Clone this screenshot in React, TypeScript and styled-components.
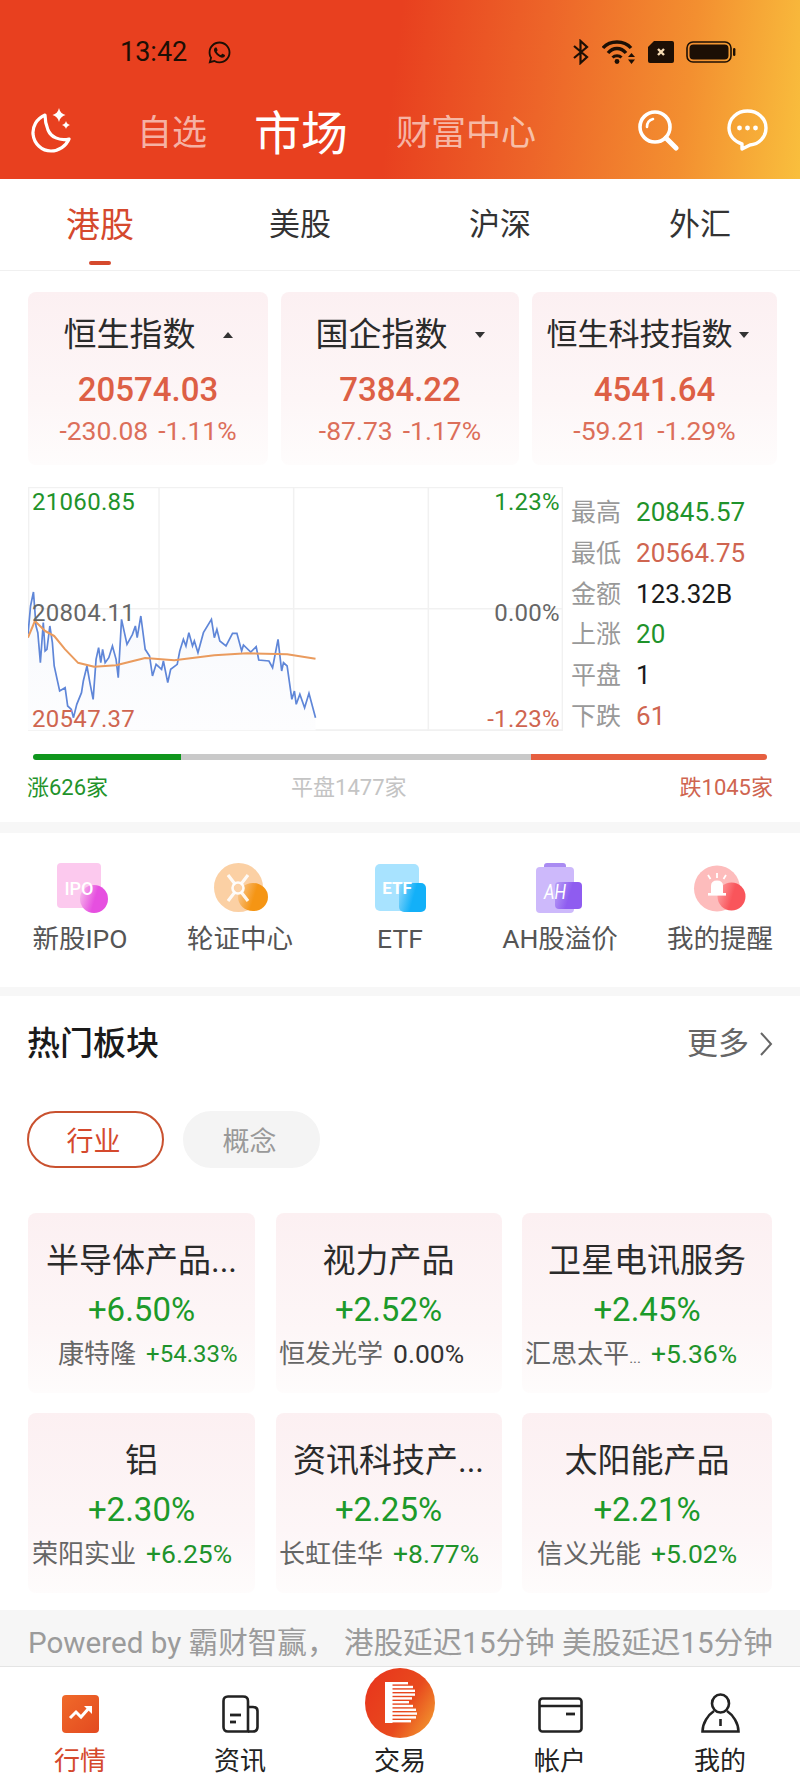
import styled, { createGlobalStyle } from "styled-components";
import { FaWhatsapp } from "react-icons/fa";

const GlobalStyle = createGlobalStyle`
  html, body {
    margin: 0;
    padding: 0;
    background: #fff;
  }
  * {
    box-sizing: border-box;
  }
  body {
    font-family: Roboto, "Noto Sans CJK SC", sans-serif;
  }
`;

const Page = styled.div`
  width: 800px;
  height: 1778px;
  display: flex;
  flex-direction: column;
  background: #fff;
  overflow: hidden;
`;

const Header = styled.header`
  height: 179px;
  background: linear-gradient(97deg, #e8401f 0%, #e8401f 49%, #ed6529 67%, #f38f30 85%, #f9bf3d 100%);
`;

const StatusBar = styled.div`
  height: 90px;
  padding: 14px 64px 0 120px;
  display: flex;
  align-items: center;
  color: #1c0f05;
`;

const Time = styled.span`
  font-size: 27px;
  line-height: 32px;
  width: 87px;
`;

const StatusIcons = styled.div`
  margin-left: auto;
  display: flex;
  align-items: center;
  gap: 12px;
`;

const Nav = styled.nav`
  height: 89px;
  padding: 0 32px 2px 31px;
  display: flex;
  align-items: center;
`;

const NavLink = styled.span<{ $active?: boolean }>`
  margin-left: ${(p) => (p.$active ? "47px" : "0")};
  margin-right: ${(p) => (p.$active ? "48px" : "0")};
  font-size: ${(p) => (p.$active ? "47px" : "35px")};
  line-height: 56px;
  color: ${(p) => (p.$active ? "#fff" : "rgba(255, 255, 255, 0.62)")};
`;

const MoonSlot = styled.div`
  width: 40px;
  height: 46px;
  margin-right: 66px;
  margin-bottom: 6px;
`;

const NavActions = styled.div`
  margin-left: auto;
  margin-bottom: 8px;
  display: flex;
  align-items: center;
  gap: 48px;
`;

const Tabs = styled.div`
  height: 92px;
  display: grid;
  grid-template-columns: repeat(4, 200px);
  border-bottom: 1px solid #f0f0f0;
`;

const Tab = styled.div<{ $active?: boolean }>`
  padding-top: 24px;
  display: flex;
  flex-direction: column;
  align-items: center;
  font-size: ${(p) => (p.$active ? "34px" : "31px")};
  line-height: 44px;
  color: ${(p) => (p.$active ? "#d5492d" : "#333")};
`;

const TabLine = styled.div`
  width: 22px;
  height: 4px;
  margin-top: 14px;
  border-radius: 2px;
  background: #d5492d;
`;

const IndexRow = styled.div`
  margin-top: 21px;
  padding-left: 28px;
  display: grid;
  grid-template-columns: 240px 238px 245px;
  gap: 13px;
`;

const IndexCard = styled.div`
  height: 173px;
  padding-top: 21px;
  border-radius: 8px;
  background: linear-gradient(180deg, #fcf0f2 0%, #fdf6f7 62%, #fefcfc 100%);
  display: flex;
  flex-direction: column;
  align-items: center;
`;

const IndexHead = styled.div<{ $gap: number; $shift: number }>`
  margin-right: ${(p) => p.$shift}px;
  display: flex;
  align-items: center;
  gap: ${(p) => p.$gap}px;
`;

const IndexName = styled.span<{ $narrow?: boolean }>`
  font-size: ${(p) => (p.$narrow ? "31px" : "33px")};
  line-height: 44px;
  color: #2b2b2b;
`;

const Caret = styled.span<{ $up?: boolean }>`
  width: 0;
  height: 0;
  border-left: 5px solid transparent;
  border-right: 5px solid transparent;
  border-${(p) => (p.$up ? "bottom" : "top")}: 6px solid #333;
`;

const IndexValue = styled.div`
  margin-top: 11px;
  font-size: 33px;
  line-height: 44px;
  font-weight: 500;
  color: #dd5f45;
`;

const IndexChange = styled.div`
  margin-top: 3px;
  display: flex;
  gap: 10px;
  font-size: 26.5px;
  line-height: 32px;
  color: #dc6f5a;
`;

const ChartRow = styled.div`
  height: 244px;
  margin-top: 22px;
  padding-left: 28px;
  display: flex;
  gap: 8px;
`;

const Chart = styled.div`
  position: relative;
  width: 535px;
  height: 244px;
`;

const ChartSvg = styled.svg`
  display: block;
  width: 100%;
  height: 100%;
`;

const AxisLabel = styled.span<{ $tone: string; $right?: boolean; $pos: string }>`
  position: absolute;
  ${(p) => (p.$right ? "right: 3px;" : "left: 4px;")}
  ${(p) => p.$pos}
  font-size: 24px;
  line-height: 28px;
  letter-spacing: 0.3px;
  color: ${(p) => p.$tone};
`;

const Stats = styled.div`
  padding-top: 5px;
  display: flex;
  flex-direction: column;
`;

const StatRow = styled.div`
  height: 40.7px;
  flex: none;
  display: flex;
  align-items: center;
  gap: 15px;
`;

const StatLabel = styled.span`
  margin-bottom: 4px;
  font-size: 25px;
  color: #999;
`;

const StatValue = styled.span<{ $tone: string }>`
  font-size: 26px;
  color: ${(p) => p.$tone};
`;

const Breadth = styled.div`
  margin: 23px 33px 0;
  height: 6px;
  display: flex;
  border-radius: 3px;
  overflow: hidden;
`;

const BreadthPart = styled.div<{ $tone: string; $width: number }>`
  width: ${(p) => p.$width}px;
  background: ${(p) => p.$tone};
`;

const BreadthLabels = styled.div`
  margin-top: 13px;
  padding: 0 27px 19px;
  display: flex;
  justify-content: space-between;
  font-size: 22px;
  line-height: 30px;
`;

const BreadthLabel = styled.span<{ $tone: string; $pull?: number }>`
  margin-right: ${(p) => p.$pull ?? 0}px;
  color: ${(p) => p.$tone};
`;

const Band = styled.div<{ $h: number }>`
  height: ${(p) => p.$h}px;
  background: #f7f7f7;
`;

const Shortcuts = styled.div`
  padding: 27px 0 30px;
  display: grid;
  grid-template-columns: repeat(5, 160px);
`;

const Shortcut = styled.div`
  display: flex;
  flex-direction: column;
  align-items: center;
  gap: 5px;
`;

const ShortcutLabel = styled.span`
  font-size: 26.5px;
  line-height: 36px;
  color: #555;
`;

const HotHead = styled.div`
  margin-top: 26px;
  padding: 0 27px 0 27px;
  display: flex;
  justify-content: space-between;
  align-items: center;
`;

const HotTitle = styled.h2`
  margin: 0;
  font-size: 33px;
  line-height: 44px;
  font-weight: 500;
  color: #1a1a1a;
`;

const More = styled.div`
  display: flex;
  align-items: center;
  gap: 10px;
  font-size: 31px;
  line-height: 44px;
  color: #666;
`;

const Pills = styled.div`
  margin-top: 45px;
  padding-left: 27px;
  display: flex;
  gap: 19px;
`;

const Pill = styled.div<{ $active?: boolean }>`
  width: 137px;
  height: 57px;
  padding-right: 4px;
  border-radius: 28.5px;
  display: flex;
  align-items: center;
  justify-content: center;
  font-size: 27px;
  border: 2px solid ${(p) => (p.$active ? "#c9512f" : "#f4f4f4")};
  background: ${(p) => (p.$active ? "#fff" : "#f4f4f4")};
  color: ${(p) => (p.$active ? "#d5492d" : "#999")};
`;

const SectorGrid = styled.div`
  margin-top: 45px;
  padding: 0 0 17px 28px;
  display: grid;
  grid-template-columns: 227px 226px 250px;
  grid-auto-rows: 180px;
  column-gap: 20.5px;
  row-gap: 20px;
`;

const SectorCard = styled.div`
  padding-top: 26px;
  border-radius: 8px;
  background: linear-gradient(180deg, #fcf0f2 0%, #fdf6f7 65%, #fefcfc 100%);
  display: flex;
  flex-direction: column;
  align-items: center;
`;

const SectorName = styled.div`
  font-size: 33px;
  line-height: 44px;
  color: #2b2b2b;
  white-space: nowrap;
`;

const SectorPct = styled.div`
  margin-top: 5px;
  font-size: 33px;
  line-height: 44px;
  color: #1c9a2a;
`;

const SectorSub = styled.div`
  margin-top: 5px;
  height: 34px;
  align-self: stretch;
  display: grid;
  grid-template-columns: 47.6% 1fr;
  column-gap: 10px;
  align-items: center;
  line-height: 34px;
  white-space: nowrap;
`;

const SectorStock = styled.span`
  font-size: 26px;
  text-align: right;
  color: #666;
`;

const StockDots = styled.span`
  font-size: 15px;
  line-height: 0;
`;

const SectorMove = styled.span<{ $tone: string; $small?: boolean }>`
  font-size: ${(p) => (p.$small ? "24px" : "26.5px")};
  color: ${(p) => p.$tone};
`;

const Notice = styled.div`
  height: 57px;
  padding: 4px 0 0 28px;
  display: flex;
  align-items: center;
  background: #f6f6f6;
  border-bottom: 1px solid #e4e4e4;
  font-size: 29.6px;
  color: #9b9b9b;
  white-space: nowrap;
`;

const TabBar = styled.div`
  height: 111px;
  display: grid;
  grid-template-columns: repeat(5, 160px);
`;

const BarItem = styled.div`
  display: flex;
  flex-direction: column;
  align-items: center;
`;

const BarIcon = styled.div<{ $raised?: boolean }>`
  height: 78px;
  padding-bottom: ${(p) => (p.$raised ? "7px" : "12px")};
  display: flex;
  align-items: flex-end;
`;

const BarLabel = styled.span<{ $active?: boolean }>`
  font-size: 26px;
  line-height: 33px;
  color: ${(p) => (p.$active ? "#d5492d" : "#222")};
`;

const Drawing = styled.svg`
  display: block;
`;

function MoonIcon() {
  return (
    <Drawing width="40" height="46" viewBox="0 0 40 46" fill="none">
      <path
        d="M14 7 C5 11 1.5 19 2 26 C3 36 11 43 20 43 C28 43 35 38 38 31 C28 33 20 29 17 22 C15 17 14 12 14 7 Z"
        stroke="#fff"
        strokeWidth="3.2"
        strokeLinejoin="round"
      />
      <path d="M28 0 C29 4 31 6 34.5 7 C31 8 29 10 28 14 C27 10 25 8 21.5 7 C25 6 27 4 28 0 Z" fill="#fff" />
      <path d="M35 13 C35.5 15 36.5 16 39 17 C36.5 18 35.5 19 35 21 C34.5 19 33.5 18 31 17 C33.5 16 34.5 15 35 13 Z" fill="#fff" />
    </Drawing>
  );
}

function SearchIcon() {
  return (
    <Drawing width="42" height="42" viewBox="0 0 42 42" fill="none">
      <circle cx="18" cy="18" r="15" stroke="#fff" strokeWidth="3.6" />
      <path d="M10 18 C10 14 12 11 16 10" stroke="#fff" strokeWidth="2.6" strokeLinecap="round" />
      <path d="M29 29 L39 39" stroke="#fff" strokeWidth="5" strokeLinecap="round" />
    </Drawing>
  );
}

function ChatIcon() {
  return (
    <Drawing width="41" height="42" viewBox="0 0 41 42" fill="none">
      <path
        d="M20.5 2 C10 2 2 9.5 2 19 C2 27 8 33 15 35 L15 40 L23 36 C32 35.5 39 28 39 19 C39 9.5 31 2 20.5 2 Z"
        stroke="#fff"
        strokeWidth="3.4"
        strokeLinejoin="round"
      />
      <circle cx="12.5" cy="19" r="2.4" fill="#fff" />
      <circle cx="20.5" cy="19" r="2.4" fill="#fff" />
      <circle cx="28.5" cy="19" r="2.4" fill="#fff" />
    </Drawing>
  );
}

function BluetoothIcon() {
  return (
    <Drawing width="18" height="26" viewBox="0 0 18 26" fill="none">
      <path d="M2 7 L15 18 L8.5 24 L8.5 2 L15 8 L2 19" stroke="#1c0f05" strokeWidth="2.2" />
    </Drawing>
  );
}

function WifiIcon() {
  return (
    <Drawing width="34" height="24" viewBox="0 0 34 24" fill="none">
      <path d="M1 8 C8 0 22 0 29 8" stroke="#1c0f05" strokeWidth="3.4" />
      <path d="M6 13 C11 7 19 7 24 13" stroke="#1c0f05" strokeWidth="3.4" />
      <path d="M10.5 17.5 C13 15 17 15 19.5 17.5" stroke="#1c0f05" strokeWidth="3" />
      <circle cx="15" cy="21.5" r="2.4" fill="#1c0f05" />
      <path d="M29.5 13 L33 17 H26 Z M29.5 24 L26 19.5 H33 Z" fill="#1c0f05" />
    </Drawing>
  );
}

function SimIcon() {
  return (
    <Drawing width="26" height="22" viewBox="0 0 26 22">
      <path d="M6 0 H24 Q26 0 26 2 V20 Q26 22 24 22 H2 Q0 22 0 20 V6 Z" fill="#1c0f05" />
      <path d="M10 8 L16 14 M16 8 L10 14" stroke="#f6dcb4" strokeWidth="2.4" />
    </Drawing>
  );
}

function BatteryIcon() {
  return (
    <Drawing width="50" height="22" viewBox="0 0 50 22">
      <rect x="1" y="1" width="44" height="20" rx="6" fill="none" stroke="#1c0f05" strokeWidth="1.6" />
      <rect x="3.5" y="3.5" width="39" height="15" rx="4" fill="#1c0f05" />
      <rect x="47" y="7" width="2.4" height="8" rx="1.2" fill="#1c0f05" />
    </Drawing>
  );
}

const bluePoints =
  "78,495 85,410 93,368 100,470 105,490 112,580 120,460 125,545 130,540 138,470 145,520 150,590 160,640 165,665 180,655 187,710 197,720 203,745 212,705 225,670 230,635 240,590 248,640 257,690 265,570 272,535 278,580 283,540 290,580 300,565 310,530 320,570 326,625 335,450 350,525 365,495 373,470 378,505 388,440 400,540 412,560 420,620 430,585 445,600 450,575 462,640 470,600 488,585 495,545 505,510 512,530 520,490 530,530 535,515 545,550 560,490 582,450 590,505 597,480 605,515 622,530 640,492 652,492 665,545 670,527 690,548 705,532 712,572 740,575 750,595 765,510 775,605 780,580 790,590 803,690 810,665 815,705 825,675 838,715 850,672 868,745";

const orangePoints =
  "78,505 97,455 125,485 150,500 180,540 215,580 260,592 320,588 400,566 480,573 590,558 680,552 790,555 868,568";

function IntradayChart() {
  const area = `${bluePoints} 868,783 78,783`;
  return (
    <ChartSvg viewBox="78 53 1470 732" preserveAspectRatio="none">
      <defs>
        <linearGradient id="chartFill" x1="0" y1="0" x2="0" y2="1">
          <stop offset="0" stopColor="#f7f9fd" />
          <stop offset="1" stopColor="#fdfdfe" />
        </linearGradient>
      </defs>
      <rect x="79" y="54" width="1468" height="729" fill="#fff" stroke="#f1f1f1" strokeWidth="2" vectorEffect="non-scaling-stroke" />
      {[438, 808, 1178].map((x) => (
        <line key={x} x1={x} y1="54" x2={x} y2="783" stroke="#f1f1f1" strokeWidth="1.5" vectorEffect="non-scaling-stroke" />
      ))}
      <line x1="79" y1="418" x2="1547" y2="418" stroke="#f1f1f1" strokeWidth="1.5" vectorEffect="non-scaling-stroke" />
      <polygon points={area} fill="url(#chartFill)" />
      <polyline points={bluePoints} fill="none" stroke="#5f86d8" strokeWidth="1.7" vectorEffect="non-scaling-stroke" />
      <polyline points={orangePoints} fill="none" stroke="#ea9b5e" strokeWidth="2" strokeLinejoin="round" vectorEffect="non-scaling-stroke" />
    </ChartSvg>
  );
}

// frosted overlap: the small shape fades into the big one on its left side
function Frost({ id, light, solid }: { id: string; light: string; solid: string }) {
  return (
    <defs>
      <linearGradient id={id} x1="0" y1="0.3" x2="1" y2="0.6">
        <stop offset="0" stopColor={light} />
        <stop offset="0.55" stopColor={solid} />
        <stop offset="1" stopColor={solid} />
      </linearGradient>
    </defs>
  );
}

function IpoIcon() {
  return (
    <Drawing width="60" height="56" viewBox="0 0 60 56">
      <Frost id="ipoFrost" light="#f6b4ea" solid="#e64fe0" />
      <rect x="7" y="3" width="44" height="45" rx="4" fill="#fcc9ee" />
      <circle cx="44" cy="39" r="14" fill="url(#ipoFrost)" />
      <text x="29" y="35" textAnchor="middle" fontSize="18" fontFamily="Roboto" fontWeight="500" fill="#fff">IPO</text>
    </Drawing>
  );
}

function WarrantIcon() {
  return (
    <Drawing width="60" height="56" viewBox="0 0 60 56">
      <Frost id="warrantFrost" light="#f8c48a" solid="#f59514" />
      <circle cx="28.5" cy="27.5" r="24.5" fill="#fbd0a4" />
      <ellipse cx="43" cy="37" rx="15" ry="14" fill="url(#warrantFrost)" />
      <path d="M18 15 L38 41 M38 15 L18 41" stroke="#fff" strokeWidth="3.2" opacity="0.9" />
      <circle cx="28" cy="28" r="5.5" fill="#fbd0a4" stroke="#fff" strokeWidth="2.6" opacity="0.95" />
    </Drawing>
  );
}

function EtfIcon() {
  return (
    <Drawing width="60" height="56" viewBox="0 0 60 56">
      <Frost id="etfFrost" light="#7fd3fb" solid="#13b0f8" />
      <rect x="5" y="4" width="44" height="47" rx="5" fill="#a8e3ff" />
      <rect x="29" y="23" width="27" height="29" rx="5" fill="url(#etfFrost)" />
      <text x="27" y="34" textAnchor="middle" fontSize="17" fontFamily="Roboto" fontWeight="700" fill="#fff">ETF</text>
    </Drawing>
  );
}

function AhIcon() {
  return (
    <Drawing width="60" height="56" viewBox="0 0 60 56">
      <Frost id="ahFrost" light="#b498f6" solid="#8f5cf0" />
      <rect x="14" y="3" width="22" height="10" rx="3" fill="#a98bf2" />
      <rect x="6" y="7" width="38" height="46" rx="4" fill="#cdb9fb" />
      <rect x="25" y="22" width="27" height="27" rx="4" fill="url(#ahFrost)" />
      <text x="25" y="39" textAnchor="middle" fontSize="21" textLength="22" lengthAdjust="spacingAndGlyphs" fontStyle="italic" fontFamily="Roboto" fill="#fff">AH</text>
    </Drawing>
  );
}

function AlertIcon() {
  return (
    <Drawing width="60" height="56" viewBox="0 0 60 56">
      <Frost id="alertFrost" light="#fd9c9e" solid="#f9555b" />
      <circle cx="27" cy="28.5" r="23" fill="#fdbcbc" />
      <circle cx="41.5" cy="36.5" r="14" fill="url(#alertFrost)" />
      <path d="M21 33 V26 Q21 20.5 27 20.5 Q33 20.5 33 26 V33 Z" fill="#fff" />
      <rect x="18" y="33" width="18" height="2.6" fill="#fff" />
      <path d="M27 13 V18 M18 15 L20.5 19 M36 15 L33.5 19" stroke="#fff" strokeWidth="1.8" />
    </Drawing>
  );
}

function MarketTabIcon() {
  return (
    <Drawing width="37" height="38" viewBox="0 0 37 38">
      <defs>
        <linearGradient id="marketFill" x1="0" y1="0" x2="1" y2="1">
          <stop offset="0" stopColor="#f06a2a" />
          <stop offset="1" stopColor="#e34a20" />
        </linearGradient>
      </defs>
      <rect width="37" height="38" rx="4" fill="url(#marketFill)" />
      <path d="M8 23 L14 17 L19 22 L27 13" fill="none" stroke="#fff" strokeWidth="3" />
      <path d="M22 11 H30 V19 Z" fill="#fff" />
    </Drawing>
  );
}

function NewsTabIcon() {
  return (
    <Drawing width="37" height="38" viewBox="0 0 37 38" fill="none">
      <path d="M26 36.5 H6 Q1.5 36.5 1.5 32 V6 Q1.5 1.5 6 1.5 H21 Q26 1.5 26 6 V36.5 Z" stroke="#222" strokeWidth="2.6" />
      <path d="M26 12 H31 Q35.5 12 35.5 16 V32 Q35.5 36.5 31 36.5 H26" stroke="#222" strokeWidth="2.6" />
      <path d="M8 20 H19" stroke="#222" strokeWidth="2.8" />
      <path d="M8 27 H14" stroke="#222" strokeWidth="2.8" />
    </Drawing>
  );
}

function TradeLogo() {
  const stripes = [
    [14, 16], [17.8, 21], [21.6, 23], [25.4, 23], [29.2, 20], [33, 17],
    [36.8, 21], [40.6, 24], [44.4, 25], [48.2, 24], [52, 19],
  ];
  return (
    <Drawing width="70" height="70" viewBox="0 0 70 70">
      <defs>
        <linearGradient id="tradeFill" x1="0" y1="0.2" x2="1" y2="0.8">
          <stop offset="0" stopColor="#e8361c" />
          <stop offset="0.6" stopColor="#e84a1e" />
          <stop offset="1" stopColor="#f2962e" />
        </linearGradient>
      </defs>
      <circle cx="35" cy="35" r="35" fill="url(#tradeFill)" />
      <rect x="20" y="14" width="7.5" height="41" fill="#fff" />
      {stripes.map(([y, w]) => (
        <rect key={y} x="27" y={y} width={w} height="2.4" fill="#fff" />
      ))}
    </Drawing>
  );
}

function WalletTabIcon() {
  return (
    <Drawing width="45" height="36" viewBox="0 0 45 36" fill="none">
      <rect x="1.5" y="1.5" width="42" height="33" rx="3" stroke="#222" strokeWidth="2.6" />
      <path d="M1.5 9 H43.5" stroke="#222" strokeWidth="2.6" />
      <path d="M28 17 H37" stroke="#222" strokeWidth="2.8" />
    </Drawing>
  );
}

function PersonTabIcon() {
  return (
    <Drawing width="39" height="40" viewBox="0 0 39 40" fill="none">
      <ellipse cx="19.5" cy="10.5" rx="8.5" ry="9" stroke="#222" strokeWidth="2.6" />
      <path d="M13 18 C7 22 1.5 30 1.5 38.5 H37.5 C37.5 30 32 22 26 18" stroke="#222" strokeWidth="2.6" />
      <path d="M19.5 26 V33" stroke="#222" strokeWidth="2.6" />
    </Drawing>
  );
}

const indices = [
  { name: "恒生指数", value: "20574.03", delta: "-230.08", pct: "-1.11%", up: true, gap: 27, shift: 0 },
  { name: "国企指数", value: "7384.22", delta: "-87.73", pct: "-1.17%", gap: 27, shift: 0 },
  { name: "恒生科技指数", value: "4541.64", delta: "-59.21", pct: "-1.29%", gap: 6, shift: 14, narrow: true },
];

const green = "#1f932b";
const red = "#cf6550";

const stats = [
  { label: "最高", value: "20845.57", tone: green },
  { label: "最低", value: "20564.75", tone: red },
  { label: "金额", value: "123.32B", tone: "#1a1a1a" },
  { label: "上涨", value: "20", tone: green },
  { label: "平盘", value: "1", tone: "#1a1a1a" },
  { label: "下跌", value: "61", tone: red },
];

const shortcuts = [
  { label: "新股IPO", icon: <IpoIcon /> },
  { label: "轮证中心", icon: <WarrantIcon /> },
  { label: "ETF", icon: <EtfIcon /> },
  { label: "AH股溢价", icon: <AhIcon /> },
  { label: "我的提醒", icon: <AlertIcon /> },
];

const sectors = [
  { name: "半导体产品...", pct: "+6.50%", stock: "康特隆", move: "+54.33%", tone: green, small: true },
  { name: "视力产品", pct: "+2.52%", stock: "恒发光学", move: "0.00%", tone: "#333" },
  { name: "卫星电讯服务", pct: "+2.45%", stock: "汇思太平", dots: true, move: "+5.36%", tone: green },
  { name: "铝", pct: "+2.30%", stock: "荣阳实业", move: "+6.25%", tone: green },
  { name: "资讯科技产...", pct: "+2.25%", stock: "长虹佳华", move: "+8.77%", tone: green },
  { name: "太阳能产品", pct: "+2.21%", stock: "信义光能", move: "+5.02%", tone: green },
];

const barItems = [
  { label: "行情", icon: <MarketTabIcon />, active: true },
  { label: "资讯", icon: <NewsTabIcon /> },
  { label: "交易", icon: <TradeLogo />, raised: true },
  { label: "帐户", icon: <WalletTabIcon /> },
  { label: "我的", icon: <PersonTabIcon /> },
];

function App() {
  return (
    <Page>
      <GlobalStyle />
      <Header>
        <StatusBar>
          <Time>13:42</Time>
          <FaWhatsapp size={25} />
          <StatusIcons>
            <BluetoothIcon />
            <WifiIcon />
            <SimIcon />
            <BatteryIcon />
          </StatusIcons>
        </StatusBar>
        <Nav>
          <MoonSlot>
            <MoonIcon />
          </MoonSlot>
          <NavLink>自选</NavLink>
          <NavLink $active>市场</NavLink>
          <NavLink>财富中心</NavLink>
          <NavActions>
            <SearchIcon />
            <ChatIcon />
          </NavActions>
        </Nav>
      </Header>

      <Tabs>
        <Tab $active>
          港股
          <TabLine />
        </Tab>
        <Tab>美股</Tab>
        <Tab>沪深</Tab>
        <Tab>外汇</Tab>
      </Tabs>

      <IndexRow>
        {indices.map((item) => (
          <IndexCard key={item.name}>
            <IndexHead $gap={item.gap} $shift={item.shift}>
              <IndexName $narrow={item.narrow}>{item.name}</IndexName>
              <Caret $up={item.up} />
            </IndexHead>
            <IndexValue>{item.value}</IndexValue>
            <IndexChange>
              <span>{item.delta}</span>
              <span>{item.pct}</span>
            </IndexChange>
          </IndexCard>
        ))}
      </IndexRow>

      <ChartRow>
        <Chart>
          <IntradayChart />
          <AxisLabel $tone={green} $pos="top: 1px;">21060.85</AxisLabel>
          <AxisLabel $tone="#666" $pos="top: 112px;">20804.11</AxisLabel>
          <AxisLabel $tone={red} $pos="bottom: -2px;">20547.37</AxisLabel>
          <AxisLabel $tone={green} $right $pos="top: 1px;">1.23%</AxisLabel>
          <AxisLabel $tone="#666" $right $pos="top: 112px;">0.00%</AxisLabel>
          <AxisLabel $tone={red} $right $pos="bottom: -2px;">-1.23%</AxisLabel>
        </Chart>
        <Stats>
          {stats.map((item) => (
            <StatRow key={item.label}>
              <StatLabel>{item.label}</StatLabel>
              <StatValue $tone={item.tone}>{item.value}</StatValue>
            </StatRow>
          ))}
        </Stats>
      </ChartRow>

      <Breadth>
        <BreadthPart $tone="#0f961d" $width={148} />
        <BreadthPart $tone="#c9c9c9" $width={350} />
        <BreadthPart $tone="#e65f40" $width={236} />
      </Breadth>
      <BreadthLabels>
        <BreadthLabel $tone={green}>涨626家</BreadthLabel>
        <BreadthLabel $tone="#c4c4c4" $pull={90}>平盘1477家</BreadthLabel>
        <BreadthLabel $tone={red}>跌1045家</BreadthLabel>
      </BreadthLabels>

      <Band $h={11} />

      <Shortcuts>
        {shortcuts.map((item) => (
          <Shortcut key={item.label}>
            {item.icon}
            <ShortcutLabel>{item.label}</ShortcutLabel>
          </Shortcut>
        ))}
      </Shortcuts>

      <Band $h={9} />

      <HotHead>
        <HotTitle>热门板块</HotTitle>
        <More>
          更多
          <Drawing width="14" height="26" viewBox="0 0 14 26" fill="none">
            <path d="M2 2 L12 13 L2 24" stroke="#666" strokeWidth="2" />
          </Drawing>
        </More>
      </HotHead>

      <Pills>
        <Pill $active>行业</Pill>
        <Pill>概念</Pill>
      </Pills>

      <SectorGrid>
        {sectors.map((item) => (
          <SectorCard key={item.name}>
            <SectorName>{item.name}</SectorName>
            <SectorPct>{item.pct}</SectorPct>
            <SectorSub>
              <SectorStock>
                {item.stock}
                {item.dots && <StockDots>...</StockDots>}
              </SectorStock>
              <SectorMove $tone={item.tone} $small={item.small}>{item.move}</SectorMove>
            </SectorSub>
          </SectorCard>
        ))}
      </SectorGrid>

      <Notice>Powered by 霸财智赢， 港股延迟15分钟 美股延迟15分钟</Notice>

      <TabBar>
        {barItems.map((item) => (
          <BarItem key={item.label}>
            <BarIcon $raised={item.raised}>{item.icon}</BarIcon>
            <BarLabel $active={item.active}>{item.label}</BarLabel>
          </BarItem>
        ))}
      </TabBar>
    </Page>
  );
}

export default App;
